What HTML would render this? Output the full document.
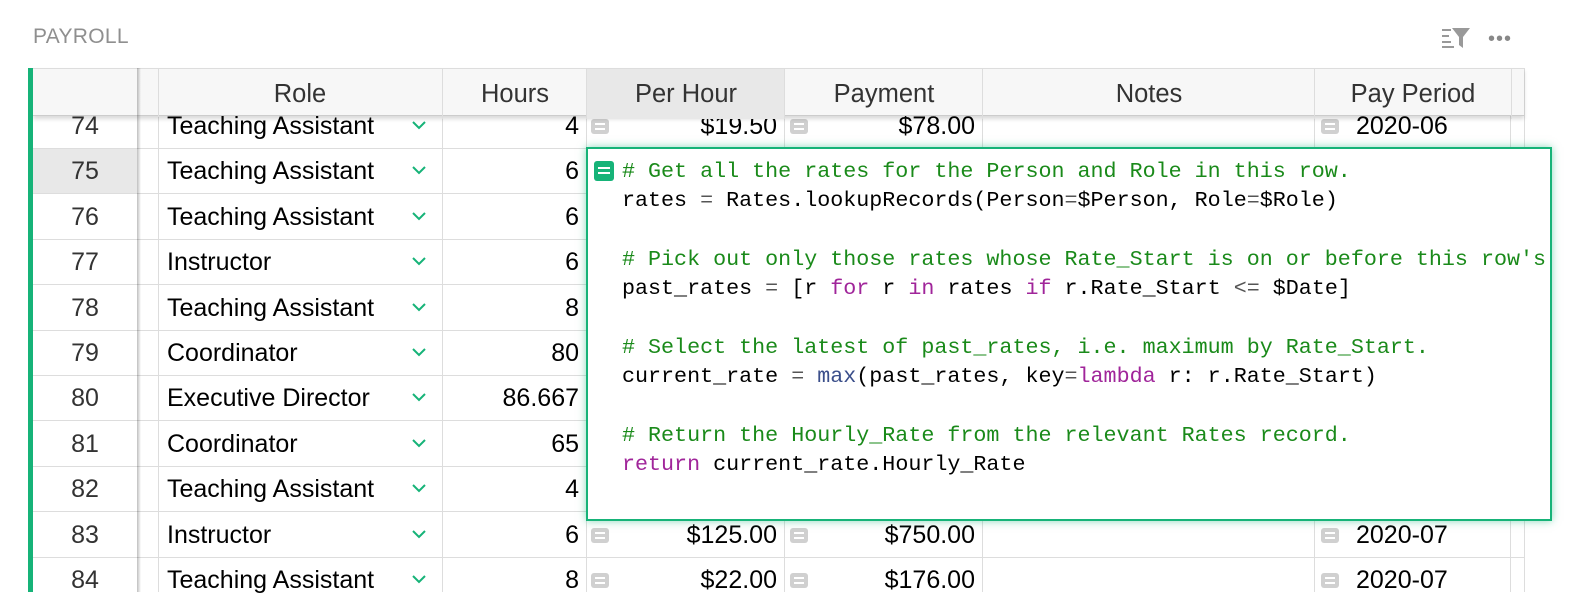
<!DOCTYPE html>
<html><head><style>
body{margin:0;width:1586px;height:592px;overflow:hidden;background:#fff;font-family:"Liberation Sans",sans-serif;position:relative}
.a{position:absolute}
.title{left:33px;top:25px;font-size:21px;color:#8f8f8f;letter-spacing:0.3px}
.hdr{top:68px;height:48px;background:#f7f7f7;border-top:1px solid #ddd;border-bottom:1px solid #ccc;box-shadow:0 3px 4px rgba(0,0,0,0.15);font-size:25.5px;color:#333;line-height:50px;text-align:center;box-sizing:border-box;z-index:3}
.vl{width:1px;background:#ddd;top:68px;bottom:0}
.hl{height:1px;background:#ddd}
.cell{font-size:25px;color:#000;line-height:47px;height:45px;white-space:nowrap}
.ic{width:18px;height:15px;background:#d0d0d0;border-radius:3px}
.ic::after{content:"";position:absolute;left:4px;right:4px;top:4px;border-top:2px solid #fff;border-bottom:2px solid #fff;height:3px}
.ed{left:586px;top:147px;width:966px;height:374px;box-sizing:border-box;border:2px solid #16b378;box-shadow:0 0 8px rgba(22,179,120,0.5);background:#fff;z-index:5;font-family:"Liberation Mono",monospace;font-size:21.7px;line-height:29.3px;color:#000;padding:8px 0 0 34px;white-space:pre}
.c{color:#1a8a1a}.k{color:#a0259a}.o{color:#555}.b{color:#3a4e8a}
</style></head><body>
<div class="a title">PAYROLL</div>
<svg class="a" style="left:1442px;top:26px" width="30" height="24" viewBox="0 0 30 24"><g fill="#999"><rect x="0" y="3" width="9" height="2"/><rect x="0" y="9" width="7" height="2"/><rect x="0" y="15" width="9" height="2"/><rect x="0" y="20" width="12" height="2"/><path d="M10 2h18l-7 9v11l-4-3v-8z"/></g></svg>
<div class="a" style="left:1488px;top:28px;font-size:20px;color:#888;letter-spacing:1px">•••</div>
<div class="a" style="left:28px;top:68px;width:5px;bottom:0;background:#16b378;z-index:4"></div>
<div class="a" style="left:137px;top:68px;width:4px;bottom:0;background:linear-gradient(90deg,rgba(0,0,0,.25),rgba(0,0,0,0));z-index:4"></div>
<div class="a hdr" style="left:33px;width:1491px">
<div class="a" style="left:125px;width:284px">Role</div>
<div class="a" style="left:409px;width:144px;border-left:1px solid #ddd">Hours</div>
<div class="a" style="left:553px;width:198px;border-left:1px solid #ddd;background:#e8e8e8">Per Hour</div>
<div class="a" style="left:751px;width:198px;border-left:1px solid #ddd">Payment</div>
<div class="a" style="left:949px;width:332px;border-left:1px solid #ddd">Notes</div>
<div class="a" style="left:1281px;width:196px;border-left:1px solid #ddd;border-right:1px solid #ddd">Pay Period</div>
<div class="a" style="left:125px;top:0;width:1px;height:48px;background:#ddd"></div>
</div>
<div class="a vl" style="left:158px"></div><div class="a vl" style="left:442px"></div><div class="a vl" style="left:586px"></div><div class="a vl" style="left:784px"></div><div class="a vl" style="left:982px"></div><div class="a vl" style="left:1314px"></div><div class="a vl" style="left:1510px"></div><div class="a vl" style="left:1524px"></div>
<div class="a" style="left:33px;top:148px;width:104px;height:45px;background:#e8e8e8"></div>
<div id="rows"></div>
<script>
var rows=[[74,"Teaching Assistant","4","$19.50","$78.00","2020-06"],[75,"Teaching Assistant","6"],[76,"Teaching Assistant","6"],[77,"Instructor","6"],[78,"Teaching Assistant","8"],[79,"Coordinator","80"],[80,"Executive Director","86.667"],[81,"Coordinator","65"],[82,"Teaching Assistant","4"],[83,"Instructor","6","$125.00","$750.00","2020-07"],[84,"Teaching Assistant","8","$22.00","$176.00","2020-07"]];
var h="";
rows.forEach(function(r,i){var t=103+i*45.4;
if(i<10)h+='<div class="a hl" style="left:33px;width:1491px;top:'+(t+45)+'px"></div>';
h+='<div class="a cell" style="left:33px;width:104px;text-align:center;top:'+t+'px;color:#333">'+r[0]+'</div>';
h+='<div class="a cell" style="left:167px;top:'+t+'px">'+r[1]+'</div>';
h+='<svg class="a" style="left:411px;top:'+(t+17)+'px" width="16" height="10" viewBox="0 0 16 10"><path d="M2 2l6 6 6-6" fill="none" stroke="#16b378" stroke-width="2"/></svg>';
h+='<div class="a cell" style="left:442px;width:137px;text-align:right;top:'+t+'px">'+r[2]+'</div>';
if(r[3]){h+='<div class="a ic" style="left:591px;top:'+(t+16)+'px"></div><div class="a cell" style="left:586px;width:191px;text-align:right;top:'+t+'px">'+r[3]+'</div>';
h+='<div class="a ic" style="left:790px;top:'+(t+16)+'px"></div><div class="a cell" style="left:784px;width:191px;text-align:right;top:'+t+'px">'+r[4]+'</div>';
h+='<div class="a ic" style="left:1321px;top:'+(t+16)+'px"></div><div class="a cell" style="left:1356px;top:'+t+'px">'+r[5]+'</div>';}
});
document.getElementById("rows").innerHTML=h;
</script>
<div class="a ed"><div class="a" style="left:6px;top:12px;width:20px;height:20px;background:#16b378;border-radius:3px"><div class="a" style="left:4px;top:6px;width:12px;height:3px;border-top:2px solid #fff;border-bottom:2px solid #fff"></div></div><span class="c"># Get all the rates for the Person and Role in this row.</span>
rates <span class="o">=</span> Rates.lookupRecords(Person<span class="o">=</span>$Person, Role<span class="o">=</span>$Role)

<span class="c"># Pick out only those rates whose Rate_Start is on or before this row's</span>
past_rates <span class="o">=</span> [r <span class="k">for</span> r <span class="k">in</span> rates <span class="k">if</span> r.Rate_Start <span class="o">&lt;=</span> $Date]

<span class="c"># Select the latest of past_rates, i.e. maximum by Rate_Start.</span>
current_rate <span class="o">=</span> <span class="b">max</span>(past_rates, key<span class="o">=</span><span class="k">lambda</span> r: r.Rate_Start)

<span class="c"># Return the Hourly_Rate from the relevant Rates record.</span>
<span class="k">return</span> current_rate.Hourly_Rate</div>
</body></html>
